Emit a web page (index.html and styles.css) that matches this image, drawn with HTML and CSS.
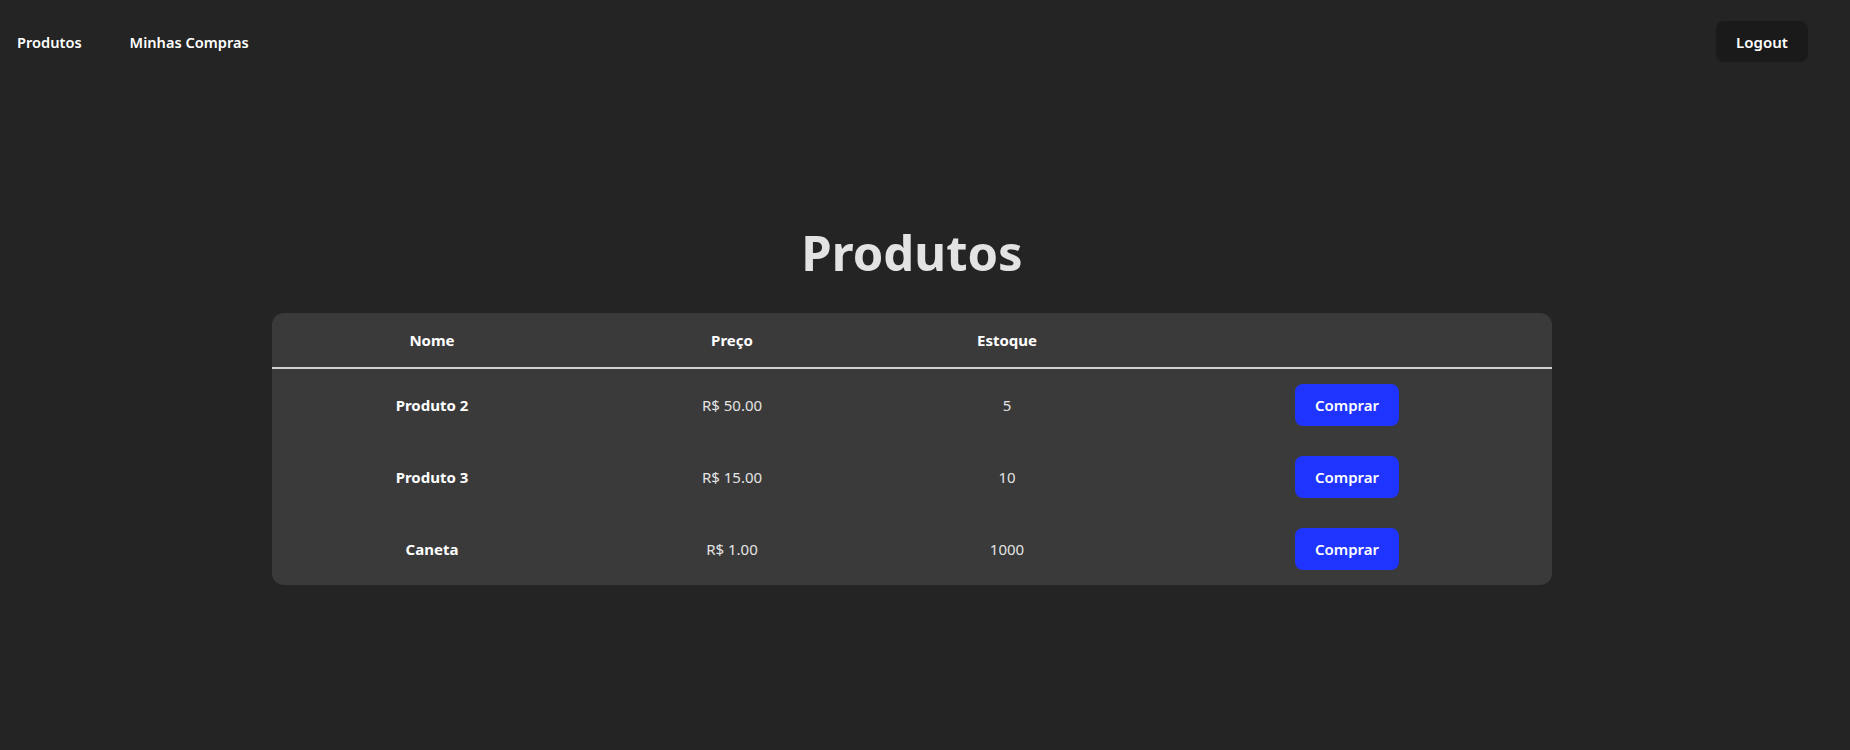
FILE: index.html
```html
<!DOCTYPE html>
<html lang="pt-BR">
<head>
<meta charset="utf-8">
<title>Produtos</title>
<link rel="stylesheet" href="styles.css">
</head>
<body>
<nav class="topbar">
  <div class="links">
    <a class="nav-link" href="#">Produtos</a>
    <a class="nav-link" href="#">Minhas Compras</a>
  </div>
  <button class="logout">Logout</button>
</nav>
<main class="page">
  <h1 class="title">Produtos</h1>
  <div class="table-card">
    <table class="products">
      <colgroup>
        <col class="c-name">
        <col class="c-price">
        <col class="c-stock">
        <col class="c-action">
      </colgroup>
      <thead>
        <tr><th>Nome</th><th>Preço</th><th>Estoque</th><th></th></tr>
      </thead>
      <tbody>
        <tr><td class="name">Produto 2</td><td>R$ 50.00</td><td>5</td><td><button class="buy">Comprar</button></td></tr>
        <tr><td class="name">Produto 3</td><td>R$ 15.00</td><td>10</td><td><button class="buy">Comprar</button></td></tr>
        <tr><td class="name">Caneta</td><td>R$ 1.00</td><td>1000</td><td><button class="buy">Comprar</button></td></tr>
      </tbody>
    </table>
  </div>
</main>
</body>
</html>
```
FILE: styles.css
```css
html, body {
  margin: 0;
  padding: 0;
}
body {
  background: #242424;
  color: rgba(255, 255, 255, 0.87);
  font-family: "Noto Sans", "Open Sans", sans-serif;
  font-size: 16px;
  width: 1850px;
  height: 750px;
  overflow: hidden;
}
.topbar {
  display: flex;
  justify-content: space-between;
  align-items: center;
  padding: 21px 42px 0 17px;
}
.links {
  display: flex;
  gap: 48px;
}
.nav-link {
  color: #ffffff;
  text-decoration: none;
  font-size: 14.6px;
  font-weight: 600;
}
.logout {
  background: #1a1a1a;
  color: #ffffff;
  border: none;
  border-radius: 8px;
  height: 41px;
  width: 92px;
  font-family: inherit;
  font-size: 15px;
  font-weight: 600;
  padding: 0;
}
.page {
  display: flex;
  flex-direction: column;
  align-items: center;
  padding-right: 26px;
}
.title {
  margin: 164px 0 33px;
  font-size: 49px;
  line-height: 1.1;
  font-weight: 700;
  color: #e3e3e3;
}
.table-card {
  width: 1280px;
  background: #3a3a3a;
  border-radius: 12px;
  overflow: hidden;
}
.products {
  width: 100%;
  border-collapse: collapse;
  table-layout: fixed;
}
.c-name { width: 320px; }
.c-price { width: 280px; }
.c-stock { width: 270px; }
.c-action { width: 410px; }
.products th {
  height: 54px;
  padding: 0;
  font-size: 15px;
  font-weight: 700;
  color: #ffffff;
  border-bottom: 2px solid #d0d0d0;
}
.products td {
  height: 72px;
  padding: 0;
  text-align: center;
  font-size: 15px;
  color: #e4e4e4;
}
.products td.name {
  font-weight: 700;
  color: #ffffff;
}
.buy {
  width: 104px;
  height: 42px;
  background: #1f35ff;
  color: #ffffff;
  border: none;
  border-radius: 8px;
  font-family: inherit;
  font-size: 15px;
  font-weight: 600;
  padding: 0;
}
```
